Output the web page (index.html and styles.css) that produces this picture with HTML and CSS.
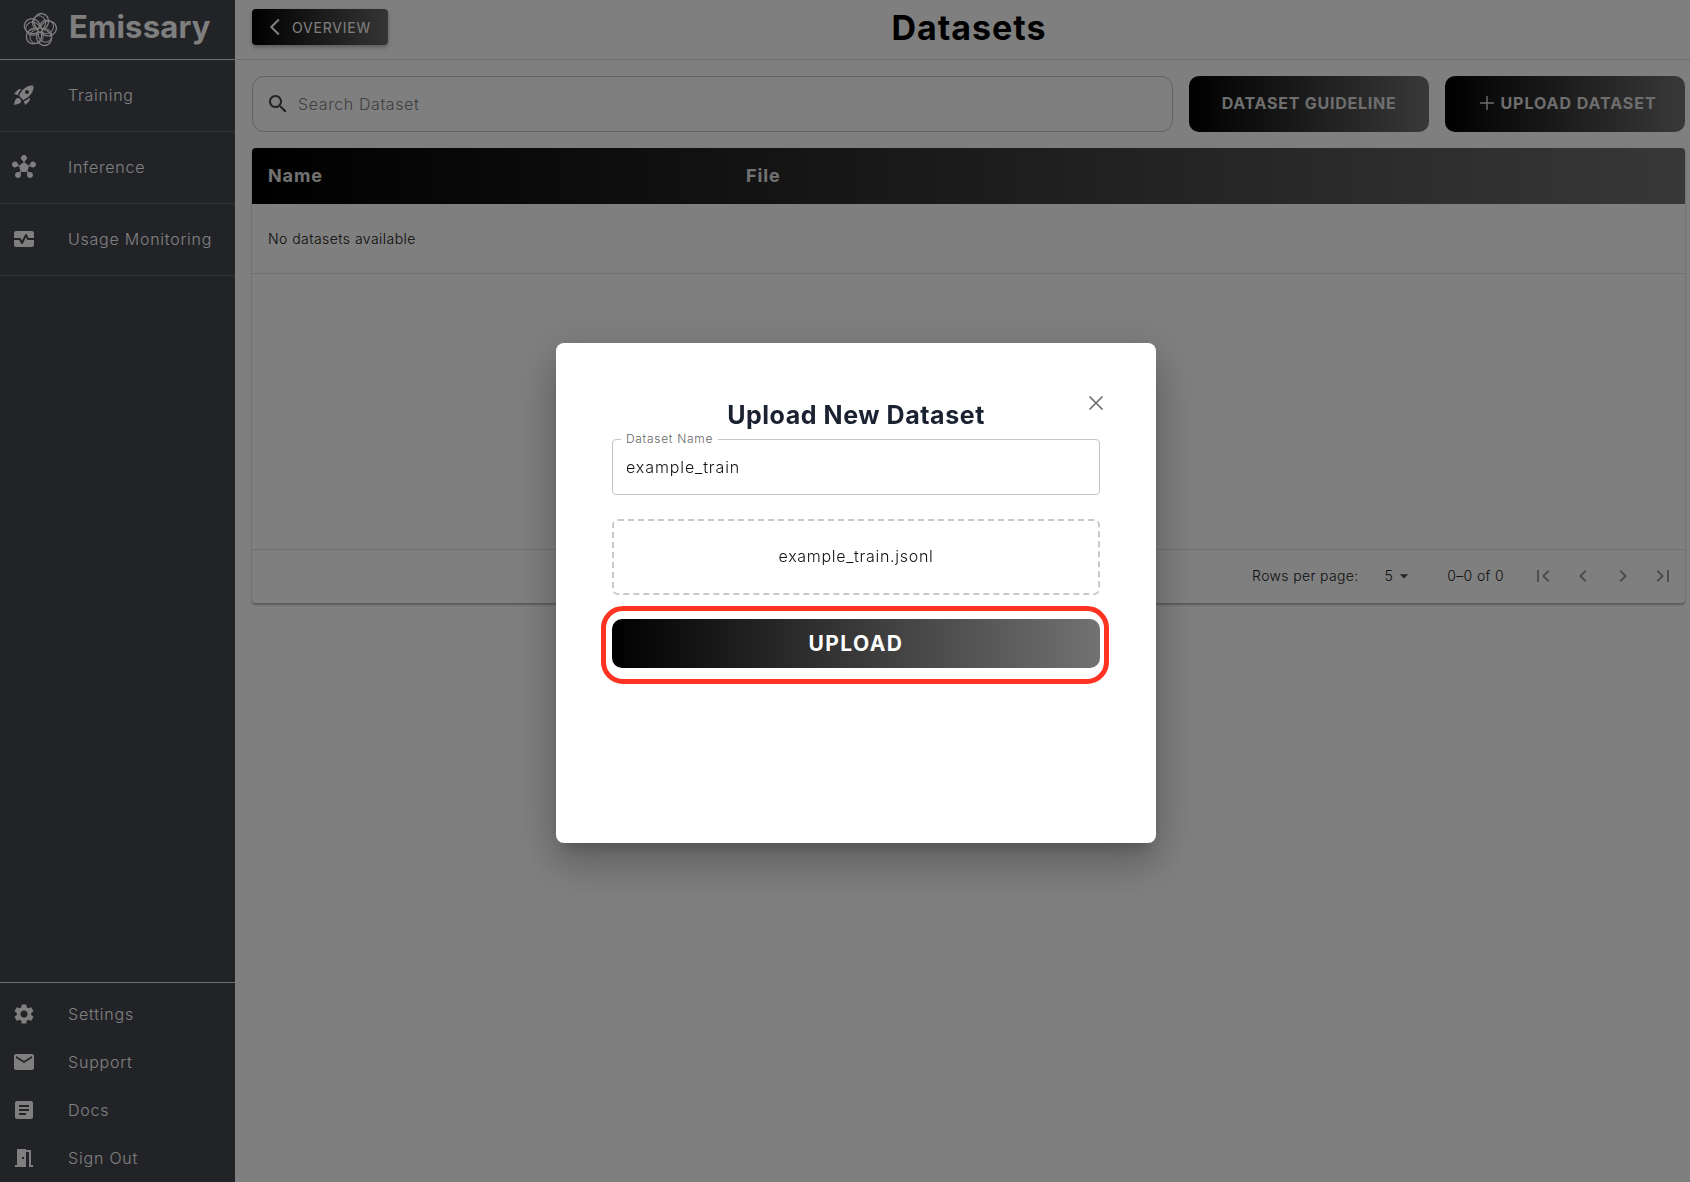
FILE: index.html
```html
<!DOCTYPE html>
<html lang="en">
<head>
<meta charset="utf-8">
<title>Datasets</title>
<link rel="stylesheet" href="styles.css">
</head>
<body>
<div class="app">
  <aside class="sidebar">
    <div class="brand">
      <svg class="brand-mark" viewBox="0 0 36 36">
        <g class="mark-outer">
          <ellipse cx="18" cy="9.4" rx="7.4" ry="8" transform="rotate(8 18 18)"/>
          <ellipse cx="18" cy="9.4" rx="7.4" ry="8" transform="rotate(80 18 18)"/>
          <ellipse cx="18" cy="9.4" rx="7.4" ry="8" transform="rotate(152 18 18)"/>
          <ellipse cx="18" cy="9.4" rx="7.4" ry="8" transform="rotate(224 18 18)"/>
          <ellipse cx="18" cy="9.4" rx="7.4" ry="8" transform="rotate(296 18 18)"/>
        </g>
        <g class="mark-inner">
          <ellipse cx="18" cy="10.6" rx="6.6" ry="7" transform="rotate(-8 18 18)"/>
          <ellipse cx="18" cy="10.6" rx="6.6" ry="7" transform="rotate(64 18 18)"/>
          <ellipse cx="18" cy="10.6" rx="6.6" ry="7" transform="rotate(136 18 18)"/>
          <ellipse cx="18" cy="10.6" rx="6.6" ry="7" transform="rotate(208 18 18)"/>
          <ellipse cx="18" cy="10.6" rx="6.6" ry="7" transform="rotate(280 18 18)"/>
        </g>
        <circle class="mark-hub" cx="18" cy="18" r="2.2"/>
      </svg>
      <span class="brand-name">Emissary</span>
    </div>
    <nav class="nav-main">
      <a class="nav-item">
        <svg class="nav-icon" viewBox="0 0 24 24"><path d="M9.19 6.35c-2.04 2.29-3.44 5.58-3.57 5.89L2 10.69l4.05-4.05c.47-.47 1.15-.68 1.81-.55l1.33.26zM11.17 17s3.74-1.55 5.89-3.7c5.4-5.4 4.5-9.62 4.21-10.57-.95-.3-5.17-1.19-10.57 4.21C8.55 9.09 7 12.83 7 12.83L11.17 17zm6.48-2.19c-2.29 2.04-5.58 3.44-5.89 3.57L13.31 22l4.05-4.05c.47-.47.68-1.15.55-1.81l-.26-1.33zM9 18c0 .83-.34 1.58-.88 2.12C6.94 21.3 2 22 2 22s.7-4.94 1.88-6.12C4.42 15.34 5.17 15 6 15c1.66 0 3 1.34 3 3zm4-9c0-1.1.9-2 2-2s2 .9 2 2-.9 2-2 2-2-.9-2-2z"/></svg>
        <span>Training</span>
      </a>
      <a class="nav-item">
        <svg class="nav-icon" viewBox="0 0 24 24"><path d="M8.4 18.2c.38.5.6 1.12.6 1.8 0 1.66-1.34 3-3 3s-3-1.34-3-3 1.34-3 3-3c.44 0 .85.09 1.23.26l1.41-1.77c-.92-1.03-1.29-2.39-1.09-3.69l-2.03-.68c-.54.83-1.46 1.38-2.52 1.38-1.66 0-3-1.34-3-3s1.34-3 3-3 3 1.34 3 3c0 .07 0 .14-.01.21l2.03.68c.64-1.21 1.82-2.09 3.22-2.32V5.91C9.96 5.57 9 4.4 9 3c0-1.66 1.34-3 3-3s3 1.34 3 3c0 1.4-.96 2.57-2.25 2.91v2.16c1.4.23 2.58 1.11 3.22 2.32L18 9.71V9.5c0-1.66 1.34-3 3-3s3 1.34 3 3-1.34 3-3 3c-1.06 0-1.98-.55-2.52-1.37l-2.03.68c.2 1.29-.16 2.65-1.09 3.69l1.41 1.77c.38-.18.79-.27 1.23-.27 1.66 0 3 1.34 3 3s-1.34 3-3 3-3-1.34-3-3c0-.68.22-1.3.6-1.8l-1.41-1.77c-1.35.75-3.01.76-4.38 0L8.4 18.2z"/></svg>
        <span>Inference</span>
      </a>
      <a class="nav-item">
        <svg class="nav-icon" viewBox="0 0 24 24"><path d="M15.11 12.45 14 10.24l-3.11 6.21c-.16.34-.51.55-.89.55s-.73-.21-.89-.55L7.38 13H2v5c0 1.1.9 2 2 2h16c1.1 0 2-.9 2-2v-5h-6c-.38 0-.73-.21-.89-.55z"/><path d="M20 4H4c-1.1 0-2 .9-2 2v5h6c.38 0 .73.21.89.55L10 13.76l3.11-6.21c.34-.68 1.45-.68 1.79 0L16.62 11H22V6c0-1.1-.9-2-2-2z"/></svg>
        <span>Usage Monitoring</span>
      </a>
    </nav>
    <nav class="nav-foot">
      <a class="foot-item">
        <svg class="nav-icon" viewBox="0 0 24 24"><path d="M19.14 12.94c.04-.3.06-.61.06-.94 0-.32-.02-.64-.07-.94l2.03-1.58c.18-.14.23-.41.12-.61l-1.92-3.32c-.12-.22-.37-.29-.59-.22l-2.39.96c-.5-.38-1.03-.7-1.62-.94l-.36-2.54c-.04-.24-.24-.41-.48-.41h-3.84c-.24 0-.43.17-.47.41l-.36 2.54c-.59.24-1.13.57-1.62.94l-2.39-.96c-.22-.08-.47 0-.59.22L2.74 8.87c-.12.21-.08.47.12.61l2.03 1.58c-.05.3-.09.63-.09.94s.02.64.07.94l-2.03 1.58c-.18.14-.23.41-.12.61l1.92 3.32c.12.22.37.29.59.22l2.39-.96c.5.38 1.03.7 1.62.94l.36 2.54c.05.24.24.41.48.41h3.84c.24 0 .44-.17.47-.41l.36-2.54c.59-.24 1.13-.56 1.62-.94l2.39.96c.22.08.47 0 .59-.22l1.92-3.32c.12-.22.07-.47-.12-.61l-2.01-1.58zM12 15.6c-1.98 0-3.6-1.62-3.6-3.6s1.62-3.6 3.6-3.6 3.6 1.62 3.6 3.6-1.62 3.6-3.6 3.6z"/></svg>
        <span>Settings</span>
      </a>
      <a class="foot-item">
        <svg class="nav-icon" viewBox="0 0 24 24"><path d="M20 4H4c-1.1 0-1.99.9-1.99 2L2 18c0 1.1.9 2 2 2h16c1.1 0 2-.9 2-2V6c0-1.1-.9-2-2-2zm0 4l-8 5-8-5V6l8 5 8-5v2z"/></svg>
        <span>Support</span>
      </a>
      <a class="foot-item">
        <svg class="nav-icon" viewBox="0 0 24 24"><path d="M19 3H5c-1.1 0-2 .9-2 2v14c0 1.1.9 2 2 2h14c1.1 0 2-.9 2-2V5c0-1.1-.9-2-2-2zm-5 14H7v-2h7v2zm3-4H7v-2h10v2zm0-4H7V7h10v2z"/></svg>
        <span>Docs</span>
      </a>
      <a class="foot-item">
        <svg class="nav-icon" viewBox="0 0 24 24"><path d="M14 6v15H3v-2h2V3h9v1h5v15h2v2h-4V6h-3zm-4 5v2h2v-2h-2z"/></svg>
        <span>Sign Out</span>
      </a>
    </nav>
  </aside>

  <main class="main">
    <header class="topbar">
      <button class="back-btn">
        <svg class="back-icon" viewBox="0 0 24 24"><path d="M17.51 3.87 15.73 2.1 5.84 12l9.9 9.9 1.77-1.77L9.38 12z"/></svg>
        <span>OVERVIEW</span>
      </button>
      <h1 class="page-title">Datasets</h1>
    </header>
    <section class="content">
      <div class="toolbar">
        <div class="search">
          <svg class="search-icon" viewBox="0 0 24 24"><path d="M15.5 14h-.79l-.28-.27C15.41 12.59 16 11.11 16 9.5 16 5.91 13.09 3 9.5 3S3 5.91 3 9.5 5.91 16 9.5 16c1.61 0 3.09-.59 4.23-1.57l.27.28v.79l5 4.99L20.49 19l-4.99-5zm-6 0C7.01 14 5 11.99 5 9.5S7.01 5 9.5 5 14 7.01 14 9.5 11.99 14 9.5 14z"/></svg>
          <span class="search-text">Search Dataset</span>
        </div>
        <button class="action-btn">DATASET GUIDELINE</button>
        <button class="action-btn upload-btn">
          <svg class="plus-icon" viewBox="0 0 16 16"><path d="M7.3 1h1.4v6.3H15v1.4H8.7V15H7.3V8.7H1V7.3h6.3z"/></svg>
          <span>UPLOAD DATASET</span>
        </button>
      </div>
      <div class="table-card">
        <div class="table-head">
          <span class="col-name">Name</span>
          <span>File</span>
        </div>
        <div class="table-row">No datasets available</div>
        <div class="table-space"></div>
        <div class="table-foot">
          <span class="rows-label">Rows per page:</span>
          <span class="rows-value">5</span>
          <svg class="caret" viewBox="0 0 24 24"><path d="M7 10l5 5 5-5z"/></svg>
          <span class="range">0–0 of 0</span>
          <span class="pager">
            <svg viewBox="0 0 24 24"><path d="M18.41 16.59 13.82 12l4.59-4.59L17 6l-6 6 6 6zM6 6h2v12H6z"/></svg>
            <svg viewBox="0 0 24 24"><path d="M15.41 7.41 14 6l-6 6 6 6 1.41-1.41L10.83 12z"/></svg>
            <svg viewBox="0 0 24 24"><path d="M10 6 8.59 7.41 13.17 12l-4.58 4.59L10 18l6-6z"/></svg>
            <svg viewBox="0 0 24 24"><path d="M5.59 7.41 10.18 12l-4.59 4.59L7 18l6-6-6-6zM16 6h2v12h-2z"/></svg>
          </span>
        </div>
      </div>
    </section>
  </main>
</div>

<div class="overlay">
  <div class="modal">
    <svg class="close" viewBox="0 0 24 24"><path d="M5.5 5.5l13 13M18.5 5.5l-13 13"/></svg>
    <h2 class="modal-title">Upload New Dataset</h2>
    <div class="field">
      <span class="field-label">Dataset Name</span>
      <span class="field-value">example_train</span>
    </div>
    <div class="dropzone"><span class="drop-text">example_train.jsonl</span></div>
    <div class="submit-wrap">
      <button class="submit">UPLOAD</button>
      <span class="highlight"></span>
    </div>
  </div>
</div>
</body>
</html>
```
FILE: styles.css
```css
* { box-sizing: border-box; }
html, body { margin: 0; height: 100%; overflow: hidden; }
body {
  font-family: "Inter", "Liberation Sans", sans-serif;
  background: #fefeff;
  color: #222;
}
svg { fill: currentColor; display: block; flex: none; }
button { font: inherit; border: 0; cursor: pointer; }

.app { display: flex; height: 100vh; }

.sidebar {
  width: 235px;
  flex: none;
  display: flex;
  flex-direction: column;
  background: #44464f;
  color: #fff;
}
.brand {
  height: 60px;
  flex: none;
  display: flex;
  align-items: center;
  gap: 11px;
  padding-left: 22px;
  border-bottom: 1px solid #dcdcdc;
}
.brand-mark { width: 36px; height: 36px; fill: none; stroke: currentColor; }
.mark-outer { stroke-width: 1.3; }
.mark-inner { stroke-width: 1; }
.mark-hub { stroke-width: 1.4; fill: #44464f; }
.brand-name { margin-bottom: 6px; font-size: 31px; font-weight: 700; letter-spacing: .2px; }

.nav-main { display: flex; flex-direction: column; }
.nav-item {
  height: 72px;
  display: flex;
  align-items: center;
  gap: 32px;
  padding: 0 0 1px 12px;
  font-size: 16px;
  font-weight: 300;
  letter-spacing: .75px;
  border-bottom: 1px solid #6a6b73;
}
.nav-icon { width: 24px; height: 24px; }

.nav-foot {
  margin-top: auto;
  padding-top: 7px;
  border-top: 1px solid #dcdcdc;
  display: flex;
  flex-direction: column;
}
.foot-item {
  height: 48px;
  display: flex;
  align-items: center;
  gap: 32px;
  padding-left: 12px;
  font-size: 16px;
  font-weight: 300;
  letter-spacing: .8px;
}

.main { flex: 1; min-width: 0; display: flex; flex-direction: column; }
.topbar {
  height: 60px;
  flex: none;
  display: flex;
  align-items: center;
  padding: 0 0 5px 17px;
  border-bottom: 1px solid #dedede;
}
.back-btn {
  width: 136px;
  height: 36px;
  display: flex;
  align-items: center;
  gap: 7px;
  padding: 0 0 0 13px;
  border-radius: 4px;
  color: #fff;
  background: linear-gradient(90deg, #000, #6a6a6a);
  box-shadow: 0 2px 4px rgba(0,0,0,.3);
  font-size: 14px;
  letter-spacing: .8px;
}
.back-icon { width: 20px; height: 20px; }
.page-title {
  flex: 1;
  margin: 0;
  padding-right: 140px;
  text-align: center;
  font-size: 34px;
  font-weight: 700;
  letter-spacing: 1px;
  color: #000;
}

.content { padding: 16px 5px 0 17px; display: flex; flex-direction: column; gap: 16px; }
.toolbar { display: flex; gap: 16px; height: 56px; }
.search {
  flex: 1;
  display: flex;
  align-items: center;
  gap: 8px;
  padding-left: 13px;
  border: 1px solid #c4c4c4;
  border-radius: 12px;
}
.search-icon { width: 24px; height: 24px; color: #444; }
.search-text { font-size: 16px; font-weight: 300; letter-spacing: .6px; color: #808080; }
.action-btn {
  width: 240px;
  flex: none;
  display: flex;
  align-items: center;
  justify-content: center;
  gap: 5px;
  padding-bottom: 3px;
  border-radius: 10px;
  color: #dcdcdc;
  background: linear-gradient(90deg, #000, #727272);
  font-size: 16px;
  font-weight: 700;
  letter-spacing: .75px;
}
.upload-btn { padding-left: 12px; letter-spacing: .95px; }
.plus-icon { width: 16px; height: 16px; }

.table-card {
  height: 455px;
  display: flex;
  flex-direction: column;
  background: #fefefe;
  border-radius: 4px;
  box-shadow: 0 2px 2px rgba(0,0,0,.28), 0 0 2px rgba(0,0,0,.1);
  overflow: hidden;
}
.table-head {
  height: 56px;
  flex: none;
  display: flex;
  align-items: center;
  padding: 0 0 2px 16px;
  color: #e4e4e4;
  background: linear-gradient(90deg, #000, #707070);
  font-size: 18px;
  font-weight: 700;
  letter-spacing: .9px;
}
.col-name { width: 478px; }
.table-row {
  height: 70px;
  flex: none;
  display: flex;
  align-items: center;
  padding-left: 16px;
  border-bottom: 1px solid #e0e0e0;
  font-size: 14px;
  letter-spacing: .45px;
  font-weight: 300;
  color: #111;
}
.table-space { flex: 1; border-bottom: 1px solid #e0e0e0; }
.table-foot {
  height: 53px;
  flex: none;
  display: flex;
  align-items: center;
  justify-content: flex-end;
  padding: 0 10px 2px 0;
  font-size: 14px;
  letter-spacing: .35px;
  font-weight: 300;
  color: #222;
}
.rows-value { margin-left: 26px; }
.caret { width: 20px; height: 20px; margin-left: 1px; color: #444; }
.range { margin-left: 33px; }
.pager { display: flex; gap: 16px; margin-left: 27px; color: #9a9a9a; }
.pager svg { width: 24px; height: 24px; }

.overlay {
  position: fixed;
  inset: 0;
  display: flex;
  align-items: center;
  justify-content: center;
  padding: 4px 0 0 22px;
  background: rgba(0,0,0,.5);
}
.modal {
  position: relative;
  width: 600px;
  height: 500px;
  padding: 57px 56px 0;
  background: #fff;
  border-radius: 8px;
  box-shadow: 0 11px 15px -7px rgba(0,0,0,.2), 0 24px 38px 3px rgba(0,0,0,.14), 0 9px 46px 8px rgba(0,0,0,.12);
}
.close {
  position: absolute;
  top: 48px;
  right: 48px;
  width: 24px;
  height: 24px;
  fill: none;
  stroke: #666;
  stroke-width: 1.5;
}
.modal-title {
  margin: 0 0 9px;
  height: 30px;
  line-height: 30px;
  text-align: center;
  font-size: 25px;
  font-weight: 700;
  letter-spacing: .55px;
  color: #1a2130;
}
.field {
  position: relative;
  height: 56px;
  display: flex;
  align-items: center;
  padding-left: 13px;
  border: 1px solid #c4c4c4;
  border-radius: 4px;
}
.field-label {
  position: absolute;
  left: 8px;
  top: -9px;
  padding: 0 5px;
  background: #fff;
  font-size: 12px;
  line-height: 15px;
  font-weight: 300;
  letter-spacing: .7px;
  color: #666;
}
.field-value { font-size: 16px; font-weight: 300; letter-spacing: .9px; color: #111; }
.dropzone {
  height: 76px;
  margin-top: 24px;
  display: flex;
  align-items: center;
  justify-content: center;
  padding-bottom: 2px;
  border: 2px dashed #c9c9c9;
  border-radius: 6px;
}
.drop-text { font-size: 16px; font-weight: 300; letter-spacing: .7px; color: #111; }
.submit-wrap { position: relative; margin-top: 24px; }
.submit {
  width: 100%;
  height: 49px;
  display: block;
  border-radius: 10px;
  color: #fff;
  background: linear-gradient(90deg, #000, #727272);
  font-size: 21px;
  font-weight: 700;
  letter-spacing: 1.4px;
}
.highlight {
  position: absolute;
  inset: -13px -9px -16px -11px;
  border: 5px solid #ff3322;
  border-radius: 22px;
  pointer-events: none;
}
```
